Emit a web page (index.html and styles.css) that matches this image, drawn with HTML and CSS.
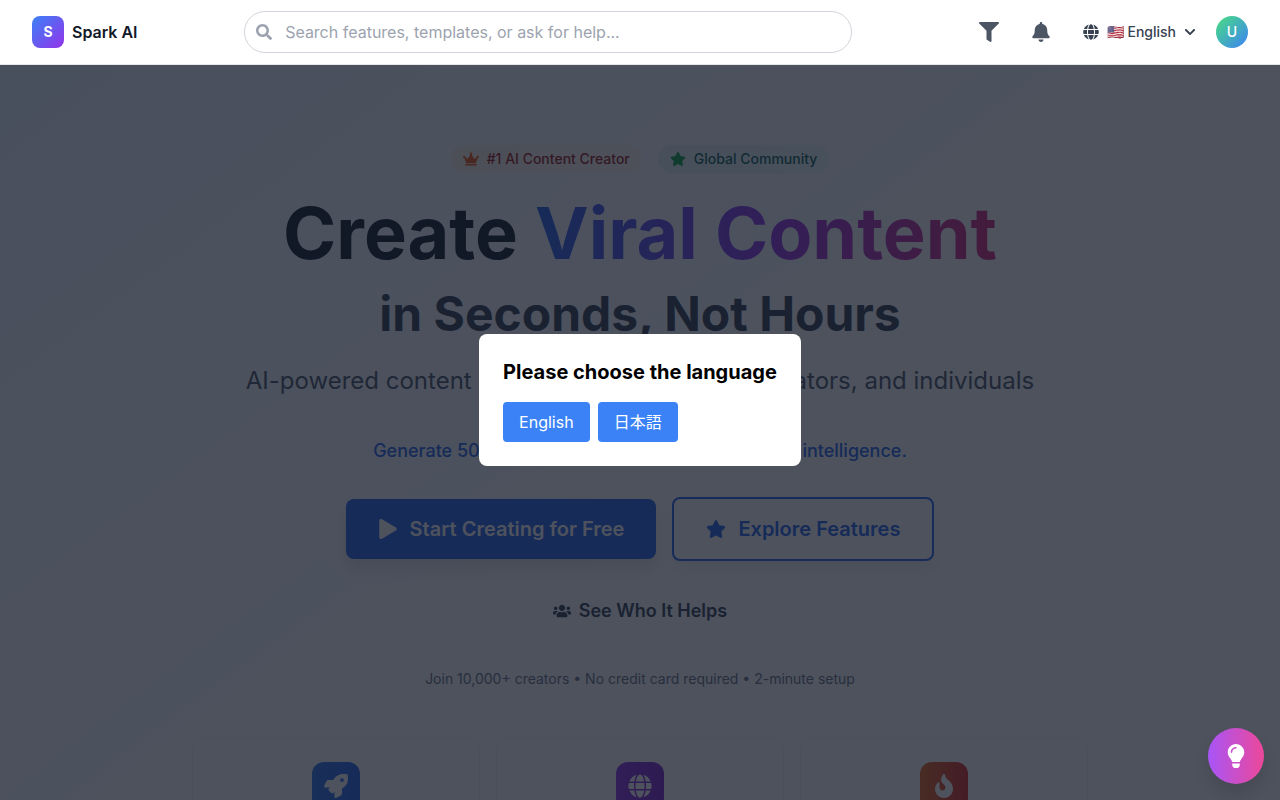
FILE: index.html
```html
<!DOCTYPE html>
<html lang="en">
<head>
    <meta charset="UTF-8">
    <meta name="viewport" content="width=device-width, initial-scale=1.0">
    <title>Spark AI</title>
    <link rel="stylesheet" href="styles.css">
</head>
<body>
    <header class="navbar">
        <a href="/" class="brand">
            <span class="brand-logo">S</span>
            <span class="brand-name">Spark AI</span>
        </a>
        <form class="search">
            <svg class="search-icon" viewBox="0 0 512 512"><path d="M505 442.7L405.3 343c-4.5-4.5-10.6-7-17-7H372c27.6-35.3 44-79.7 44-128C416 93.1 322.9 0 208 0S0 93.1 0 208s93.1 208 208 208c48.3 0 92.7-16.4 128-44v16.3c0 6.4 2.5 12.5 7 17l99.7 99.7c9.4 9.4 24.6 9.4 33.9 0l28.3-28.3c9.4-9.4 9.4-24.6.1-34zM208 336c-70.7 0-128-57.2-128-128 0-70.7 57.2-128 128-128 70.7 0 128 57.2 128 128 0 70.7-57.2 128-128 128z"/></svg>
            <input type="text" class="search-input" aria-label="Search" placeholder="Search features, templates, or ask for help...">
        </form>
        <div class="nav-actions">
            <button type="button" class="icon-button" aria-label="Filter">
                <svg class="icon-md" viewBox="0 0 512 512"><path d="M487.976 0H24.028C2.71 0-8.047 25.866 7.058 40.971L192 225.941V432c0 7.831 3.821 15.17 10.237 19.662l80 55.98C298.02 518.69 320 507.493 320 487.98V225.941l184.947-184.97C520.021 25.896 509.338 0 487.976 0z"/></svg>
            </button>
            <button type="button" class="icon-button" aria-label="Notifications">
                <svg class="icon-md" viewBox="0 0 448 512"><path d="M224 512c35.32 0 63.97-28.65 63.97-64H160.03c0 35.35 28.65 64 63.97 64zm215.39-149.71c-19.32-20.76-55.47-51.99-55.47-154.29 0-77.7-54.48-139.9-127.94-155.16V32c0-17.67-14.32-32-31.98-32s-31.98 14.33-31.98 32v20.84C118.56 68.1 64.08 130.3 64.08 208c0 102.3-36.15 133.53-55.47 154.29-6 6.45-8.66 14.16-8.61 21.71.11 16.4 12.98 32 32.1 32h383.8c19.12 0 32-15.6 32.1-32 .05-7.55-2.61-15.27-8.61-21.71z"/></svg>
            </button>
            <button type="button" class="lang-button">
                <svg class="icon-sm" viewBox="0 0 496 512"><path d="M336.5 160C322 70.7 287.8 8 248 8s-74 62.7-88.5 152h177zM152 256c0 22.2 1.2 43.5 3.3 64h185.3c2.1-20.5 3.3-41.8 3.3-64s-1.2-43.5-3.3-64H155.3c-2.1 20.5-3.3 41.8-3.3 64zm324.7-96c-28.6-67.9-86.5-120.4-158-141.6 24.4 33.8 41.2 84.7 50 141.6h108zM177.2 18.4C105.8 39.6 47.8 92.1 19.3 160h108c8.7-56.9 25.5-107.8 49.9-141.6zM487.4 192H372.7c2.1 21 3.3 42.5 3.3 64s-1.2 43-3.3 64h114.6c5.5-20.5 8.6-41.8 8.6-64s-3.1-43.5-8.5-64zM120 256c0-21.5 1.2-43 3.3-64H8.6C3.2 212.5 0 233.8 0 256s3.2 43.5 8.6 64h114.6c-2-21-3.2-42.5-3.2-64zm39.5 96c14.5 89.3 48.7 152 88.5 152s74-62.7 88.5-152h-177zm159.3 141.6c71.4-21.2 129.4-73.7 158-141.6h-108c-8.8 56.9-25.6 107.8-50 141.6zM19.3 352c28.6 67.9 86.5 120.4 158 141.6-24.4-33.8-41.2-84.7-50-141.6h-108z"/></svg>
                <span>🇺🇸 English</span>
                <svg class="icon-xs" viewBox="0 0 448 512"><path d="M207.029 381.476L12.686 187.132c-9.373-9.373-9.373-24.569 0-33.941l22.667-22.667c9.357-9.357 24.522-9.375 33.901-.04L224 284.505l154.745-154.021c9.379-9.335 24.544-9.317 33.901.04l22.667 22.667c9.373 9.373 9.373 24.569 0 33.941L240.971 381.476c-9.373 9.372-24.569 9.372-33.942 0z"/></svg>
            </button>
            <button type="button" class="avatar">U</button>
        </div>
    </header>

    <main class="hero">
        <div class="badges">
            <span class="badge badge-orange">
                <svg class="icon-sm" viewBox="0 0 640 512"><path d="M528 448H112c-8.8 0-16 7.2-16 16v32c0 8.8 7.2 16 16 16h416c8.8 0 16-7.2 16-16v-32c0-8.8-7.2-16-16-16zm64-320c-26.5 0-48 21.5-48 48 0 7.1 1.6 13.7 4.4 19.8L476 239.2c-15.4 9.2-35.3 4-44.2-11.6L350.3 85C361 76.2 368 63 368 48c0-26.5-21.5-48-48-48s-48 21.5-48 48c0 15 7 28.2 17.7 37l-81.5 142.6c-8.9 15.6-28.9 20.8-44.2 11.6l-72.3-43.4c2.7-6 4.4-12.7 4.4-19.8 0-26.5-21.5-48-48-48S0 149.5 0 176s21.5 48 48 48c2.6 0 5.2-.4 7.7-.8L128 416h384l72.3-192.8c2.5.4 5.1.8 7.7.8 26.5 0 48-21.5 48-48s-21.5-48-48-48z"/></svg>
                #1 AI Content Creator
            </span>
            <span class="badge badge-green">
                <svg class="icon-sm" viewBox="0 0 576 512"><path d="M259.3 17.8L194 150.2 47.9 171.5c-26.2 3.8-36.7 36.1-17.7 54.6l105.7 103-25 145.5c-4.5 26.3 23.2 46 46.4 33.7L288 439.6l130.7 68.7c23.2 12.2 50.9-7.4 46.4-33.7l-25-145.5 105.7-103c19-18.5 8.5-50.8-17.7-54.6L382 150.2 316.7 17.8c-11.7-23.6-45.6-23.9-57.4 0z"/></svg>
                Global Community
            </span>
        </div>

        <h1 class="title">Create <span class="title-gradient">Viral Content</span></h1>
        <h2 class="subtitle">in Seconds, Not Hours</h2>
        <p class="lead">AI-powered content creation for businesses, creators, and individuals</p>
        <p class="tagline">Generate 50+ viral ideas in seconds with artificial intelligence.</p>

        <div class="cta">
            <a href="#start" class="cta-button cta-primary">
                <svg class="icon-md" viewBox="0 0 448 512"><path d="M424.4 214.7L72.4 6.6C43.8-10.3 0 6.1 0 47.9V464c0 37.5 40.7 60.1 72.4 41.3l352-208c31.4-18.5 31.5-64.1 0-82.6z"/></svg>
                Start Creating for Free
            </a>
            <a href="#features" class="cta-button cta-outline">
                <svg class="icon-md" viewBox="0 0 576 512"><path d="M259.3 17.8L194 150.2 47.9 171.5c-26.2 3.8-36.7 36.1-17.7 54.6l105.7 103-25 145.5c-4.5 26.3 23.2 46 46.4 33.7L288 439.6l130.7 68.7c23.2 12.2 50.9-7.4 46.4-33.7l-25-145.5 105.7-103c19-18.5 8.5-50.8-17.7-54.6L382 150.2 316.7 17.8c-11.7-23.6-45.6-23.9-57.4 0z"/></svg>
                Explore Features
            </a>
        </div>

        <a href="#who" class="who-link">
            <svg class="icon-users" viewBox="0 0 640 512"><path d="M96 224c35.3 0 64-28.7 64-64s-28.7-64-64-64-64 28.7-64 64 28.7 64 64 64zm448 0c35.3 0 64-28.7 64-64s-28.7-64-64-64-64 28.7-64 64 28.7 64 64 64zm32 32h-64c-17.6 0-33.5 7.1-45.1 18.6 40.3 22.1 68.9 62 75.1 109.4h66c17.7 0 32-14.3 32-32v-32c0-35.3-28.7-64-64-64zm-256 0c61.9 0 112-50.1 112-112S381.9 32 320 32 208 82.1 208 144s50.1 112 112 112zm76.8 32h-8.3c-20.8 10-43.9 16-68.5 16s-47.6-6-68.5-16h-8.3C179.6 288 128 339.6 128 403.2V432c0 26.5 21.5 48 48 48h288c26.5 0 48-21.5 48-48v-28.8c0-63.6-51.6-115.2-115.2-115.2zm-223.7-13.4C161.5 263.1 145.6 256 128 256H64c-35.3 0-64 28.7-64 64v32c0 17.7 14.3 32 32 32h65.9c6.3-47.4 34.9-87.3 75.2-109.4z"/></svg>
            See Who It Helps
        </a>
        <p class="note">Join 10,000+ creators • No credit card required • 2-minute setup</p>

        <div class="cards">
            <div class="card">
                <div class="card-icon card-icon-blue">
                    <svg class="icon-lg" viewBox="0 0 512 512"><path d="M505.12 19.094c-1.19-5.531-6.658-11-12.207-12.188C460.716 0 435.507 0 410.407 0 307.175 0 245.27 55.203 199.052 128H94.838c-16.348.016-35.557 11.875-42.887 26.484L2.516 253.297A28.4 28.4 0 0 0 0 264a24.009 24.009 0 0 0 24.006 24h103.81l-22.474 22.469c-11.366 11.361-12.997 32.258 0 45.25l50.904 50.906c11.156 11.188 32.156 13.156 45.277 0l22.475-22.469V488a24.009 24.009 0 0 0 24.005 24 28.56 28.56 0 0 0 10.707-2.516l98.729-49.39c14.629-7.297 26.508-26.5 26.508-42.86V312.797c72.597-46.313 128.035-108.406 128.035-211.094.093-25.203.093-50.406-6.862-82.609zM384.04 168a40 40 0 1 1 40.01-40 40.023 40.023 0 0 1-40.01 40z"/></svg>
                </div>
            </div>
            <div class="card">
                <div class="card-icon card-icon-purple">
                    <svg class="icon-lg" viewBox="0 0 496 512"><path d="M336.5 160C322 70.7 287.8 8 248 8s-74 62.7-88.5 152h177zM152 256c0 22.2 1.2 43.5 3.3 64h185.3c2.1-20.5 3.3-41.8 3.3-64s-1.2-43.5-3.3-64H155.3c-2.1 20.5-3.3 41.8-3.3 64zm324.7-96c-28.6-67.9-86.5-120.4-158-141.6 24.4 33.8 41.2 84.7 50 141.6h108zM177.2 18.4C105.8 39.6 47.8 92.1 19.3 160h108c8.7-56.9 25.5-107.8 49.9-141.6zM487.4 192H372.7c2.1 21 3.3 42.5 3.3 64s-1.2 43-3.3 64h114.6c5.5-20.5 8.6-41.8 8.6-64s-3.1-43.5-8.5-64zM120 256c0-21.5 1.2-43 3.3-64H8.6C3.2 212.5 0 233.8 0 256s3.2 43.5 8.6 64h114.6c-2-21-3.2-42.5-3.2-64zm39.5 96c14.5 89.3 48.7 152 88.5 152s74-62.7 88.5-152h-177zm159.3 141.6c71.4-21.2 129.4-73.7 158-141.6h-108c-8.8 56.9-25.6 107.8-50 141.6zM19.3 352c28.6 67.9 86.5 120.4 158 141.6-24.4-33.8-41.2-84.7-50-141.6h-108z"/></svg>
                </div>
            </div>
            <div class="card">
                <div class="card-icon card-icon-red">
                    <svg class="icon-lg" viewBox="0 0 384 512"><path d="M216 23.86c0-23.8-30.65-32.77-44.15-13.04C48 191.85 224 200 224 288c0 35.63-29.11 64.46-64.85 63.99-35.17-.45-63.15-29.77-63.15-64.94v-85.51c0-21.7-26.47-32.23-41.43-16.5C27.8 213.16 0 261.33 0 320c0 105.87 86.13 192 192 192s192-86.13 192-192c0-170.29-168-193-168-296.14z"/></svg>
                </div>
            </div>
        </div>
    </main>

    <div class="overlay">
        <div class="modal" role="dialog" aria-labelledby="modal-title">
            <h2 class="modal-title" id="modal-title">Please choose the language</h2>
            <div class="modal-buttons">
                <button type="button" class="modal-button">English</button>
                <button type="button" class="modal-button" lang="ja">日本語</button>
            </div>
        </div>
    </div>

    <button type="button" class="help-button" aria-label="Tips">
        <svg class="icon-lg" viewBox="0 0 352 512"><path d="M96.06 454.35c.01 6.29 1.87 12.45 5.36 17.69l17.09 25.69a31.99 31.99 0 0 0 26.64 14.28h61.71a31.99 31.99 0 0 0 26.64-14.28l17.09-25.69a31.989 31.989 0 0 0 5.36-17.69l.04-38.35H96.01l.05 38.35zM0 176c0 44.37 16.45 84.85 43.56 115.78 16.52 18.85 42.36 58.23 52.21 91.45.04.26.07.52.11.78h160.24c.04-.26.07-.51.11-.78 9.85-33.22 35.69-72.6 52.21-91.45C335.55 260.85 352 220.37 352 176 352 78.61 272.91-.3 175.45 0 73.44.31 0 82.97 0 176zm176-80c-44.11 0-80 35.89-80 80 0 8.84-7.16 16-16 16s-16-7.16-16-16c0-61.76 50.24-112 112-112 8.84 0 16 7.16 16 16s-7.16 16-16 16z"/></svg>
    </button>
</body>
</html>
```
FILE: styles.css
```css
* {
    box-sizing: border-box;
}
html {
    scrollbar-width: none;
}
body {
    margin: 0;
    font-family: Inter, "Noto Sans CJK JP", sans-serif;
    font-size: 16px;
    line-height: 24px;
    color: #111827;
    background-color: #fff;
}
h1, h2, p {
    margin: 0;
}
a {
    color: inherit;
    text-decoration: none;
}
button {
    font: inherit;
    color: inherit;
    border: none;
    background: none;
    padding: 0;
    cursor: pointer;
}
svg {
    fill: currentColor;
    flex-shrink: 0;
}
.icon-xs {
    width: 12px;
    height: 12px;
}
.icon-sm {
    width: 16px;
    height: 16px;
}
.icon-users {
    width: 18px;
    height: 18px;
}
.icon-md {
    width: 20px;
    height: 20px;
}
.icon-lg {
    width: 24px;
    height: 24px;
}

/* Navbar, stays above the overlay */
.navbar {
    position: sticky;
    top: 0;
    z-index: 60;
    display: flex;
    align-items: center;
    justify-content: space-between;
    height: 65px;
    padding: 0 32px;
    background-color: #fff;
    border-bottom: 1px solid #e5e7eb;
}
.brand {
    display: flex;
    align-items: center;
    gap: 8px;
}
.brand-logo {
    display: flex;
    align-items: center;
    justify-content: center;
    width: 32px;
    height: 32px;
    border-radius: 8px;
    font-size: 14px;
    font-weight: 700;
    color: #fff;
    background: linear-gradient(to bottom right, #3b82f6, #9333ea);
}
.brand-name {
    font-weight: 600;
}
.search {
    position: relative;
    flex: 1;
    max-width: 608px;
    margin: 0 32px;
}
.search-icon {
    position: absolute;
    left: 12px;
    top: 13px;
    width: 16px;
    height: 16px;
    color: #9ca3af;
}
.search-input {
    display: block;
    width: 100%;
    height: 42px;
    padding: 0 16px 0 40px;
    border: 1px solid #d1d5db;
    border-radius: 21px;
    outline: none;
    font: inherit;
    color: #111827;
    background-color: #fff;
}
.search-input::placeholder {
    color: #9ca3af;
}
.nav-actions {
    display: flex;
    align-items: center;
    gap: 8px;
    margin-left: 8px;
}
.icon-button {
    display: flex;
    padding: 12px;
    color: #4b5563;
}
.lang-button {
    display: flex;
    align-items: center;
    gap: 8px;
    padding: 8px 12px;
    font-size: 14px;
    line-height: 20px;
    font-weight: 500;
    color: #374151;
}
.avatar {
    width: 32px;
    height: 32px;
    border-radius: 50%;
    font-size: 14px;
    font-weight: 500;
    color: #fff;
    background: linear-gradient(to bottom right, #4ade80, #3b82f6);
}

/* Hero */
.hero {
    display: flex;
    flex-direction: column;
    align-items: center;
    padding: 80px 32px;
    text-align: center;
    background: linear-gradient(to bottom right, #eff6ff, #fff 50%, #fff);
}
.badges {
    display: flex;
    gap: 16px;
    margin-bottom: 24px;
}
.badge {
    display: flex;
    align-items: center;
    gap: 8px;
    padding: 4px 12px;
    border-radius: 14px;
    font-size: 14px;
    line-height: 20px;
    font-weight: 500;
}
.badge-orange {
    color: #991b1b;
    background: linear-gradient(to right, #fff3e8, #fff7ed);
}
.badge-orange svg {
    color: #ea580c;
}
.badge-green {
    color: #115e59;
    background: linear-gradient(to right, #e6f7f2, #e9f8f6);
}
.badge-green svg {
    color: #16a34a;
}
.title {
    font-size: 72px;
    line-height: 72px;
    font-weight: 700;
}
.title-gradient {
    color: transparent;
    background: linear-gradient(to right, #2563eb, #9333ea, #db2777);
    background-clip: text;
    -webkit-background-clip: text;
}
.subtitle {
    margin-top: 16px;
    font-size: 48px;
    line-height: 58px;
    font-weight: 700;
    color: #374151;
}
.lead {
    margin-top: 22px;
    font-size: 24px;
    line-height: 32px;
    color: #4b5563;
}
.tagline {
    margin-top: 40px;
    font-size: 18px;
    line-height: 28px;
    font-weight: 500;
    color: #2563eb;
}
.cta {
    display: flex;
    align-items: center;
    gap: 16px;
    margin-top: 32px;
}
.cta-button {
    display: flex;
    align-items: center;
    gap: 12px;
    padding: 16px 32px;
    border-radius: 8px;
    font-size: 20px;
    line-height: 28px;
    font-weight: 600;
}
.cta-primary {
    color: #fff;
    background-color: #2563eb;
    box-shadow: 0 10px 15px rgba(0, 0, 0, 0.1);
}
.cta-outline {
    color: #2563eb;
    border: 2px solid #2563eb;
    background-color: #fff;
    box-shadow: 0 10px 15px rgba(0, 0, 0, 0.05);
}
.who-link {
    display: flex;
    align-items: center;
    gap: 8px;
    margin-top: 36px;
    font-size: 18px;
    line-height: 28px;
    font-weight: 600;
    color: #374151;
}
.note {
    margin-top: 44px;
    font-size: 14px;
    line-height: 20px;
    color: #6b7280;
}
.cards {
    display: grid;
    grid-template-columns: repeat(3, 1fr);
    gap: 16px;
    width: 100%;
    max-width: 896px;
    margin-top: 48px;
}
.card {
    display: flex;
    justify-content: center;
    min-height: 200px;
    padding: 24px;
    border: 1px solid #f3f4f6;
    border-radius: 12px;
    background-color: #fff;
    box-shadow: 0 1px 2px rgba(0, 0, 0, 0.05);
}
.card-icon {
    display: flex;
    align-items: center;
    justify-content: center;
    width: 48px;
    height: 48px;
    border-radius: 12px;
    color: #fff;
}
.card-icon-blue {
    background: linear-gradient(to right, #2f74e8, #2563eb);
}
.card-icon-purple {
    background: linear-gradient(to right, #9333ea, #7e22ce);
}
.card-icon-red {
    background: linear-gradient(to right, #ea6a1c, #dc2626);
}

/* Language modal */
.overlay {
    position: fixed;
    inset: 0;
    z-index: 50;
    display: flex;
    align-items: center;
    justify-content: center;
    background-color: rgba(17, 24, 39, 0.75);
}
.modal {
    padding: 24px;
    border-radius: 8px;
    background-color: #fff;
}
.modal-title {
    margin-bottom: 16px;
    font-size: 20px;
    line-height: 28px;
    font-weight: 700;
    color: #000;
}
.modal-buttons {
    display: flex;
    gap: 8px;
}
.modal-button {
    padding: 8px 16px;
    border-radius: 4px;
    color: #fff;
    background-color: #3b82f6;
}

.help-button {
    position: fixed;
    right: 16px;
    bottom: 16px;
    z-index: 60;
    display: flex;
    align-items: center;
    justify-content: center;
    width: 56px;
    height: 56px;
    border-radius: 50%;
    color: #fff;
    background: linear-gradient(to right, #a855f7, #ec4899);
    box-shadow: 0 10px 15px rgba(0, 0, 0, 0.1);
}
```
